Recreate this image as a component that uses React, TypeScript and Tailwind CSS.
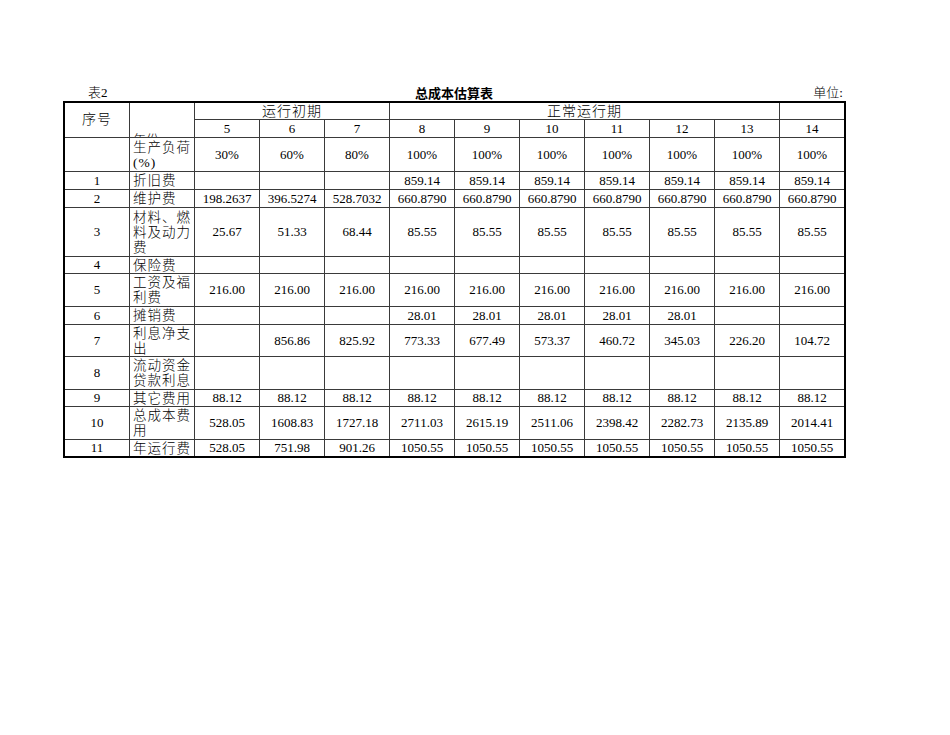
import React from "react";

const years = ["5", "6", "7", "8", "9", "10", "11", "12", "13", "14"];

const rows: { no: string; label: string[]; vals: string[] }[] = [
  { no: "", label: ["生产负荷", "(%)"], vals: ["30%", "60%", "80%", "100%", "100%", "100%", "100%", "100%", "100%", "100%"] },
  { no: "1", label: ["折旧费"], vals: ["", "", "", "859.14", "859.14", "859.14", "859.14", "859.14", "859.14", "859.14"] },
  { no: "2", label: ["维护费"], vals: ["198.2637", "396.5274", "528.7032", "660.8790", "660.8790", "660.8790", "660.8790", "660.8790", "660.8790", "660.8790"] },
  { no: "3", label: ["材料、燃", "料及动力", "费"], vals: ["25.67", "51.33", "68.44", "85.55", "85.55", "85.55", "85.55", "85.55", "85.55", "85.55"] },
  { no: "4", label: ["保险费"], vals: ["", "", "", "", "", "", "", "", "", ""] },
  { no: "5", label: ["工资及福", "利费"], vals: Array(10).fill("216.00") },
  { no: "6", label: ["摊销费"], vals: ["", "", "", "28.01", "28.01", "28.01", "28.01", "28.01", "", ""] },
  { no: "7", label: ["利息净支", "出"], vals: ["", "856.86", "825.92", "773.33", "677.49", "573.37", "460.72", "345.03", "226.20", "104.72"] },
  { no: "8", label: ["流动资金", "贷款利息"], vals: ["", "", "", "", "", "", "", "", "", ""] },
  { no: "9", label: ["其它费用"], vals: Array(10).fill("88.12") },
  { no: "10", label: ["总成本费", "用"], vals: ["528.05", "1608.83", "1727.18", "2711.03", "2615.19", "2511.06", "2398.42", "2282.73", "2135.89", "2014.41"] },
  { no: "11", label: ["年运行费"], vals: ["528.05", "751.98", "901.26", "1050.55", "1050.55", "1050.55", "1050.55", "1050.55", "1050.55", "1050.55"] },
];

// excel-style "distributed" text: every line but the last is spread to full width
function Label({ lines }: { lines: string[] }) {
  return (
    <div className="bg-white flex flex-col justify-center pl-[3px] pr-[4px] text-[13.5px] leading-[15px] font-light">
      {lines.map((l, i) =>
        i < lines.length - 1 ? (
          <div key={i} className="flex justify-between">
            {l.split("").map((c, j) => (
              <span key={j}>{c}</span>
            ))}
          </div>
        ) : (
          <div key={i} className="whitespace-nowrap tracking-[1px]">{l}</div>
        )
      )}
    </div>
  );
}

function Cell({ children, className = "" }: { children?: React.ReactNode; className?: string }) {
  return <div className={"bg-white flex items-center justify-center whitespace-nowrap " + className}>{children}</div>;
}

export default function App() {
  return (
    <div className="w-[950px] h-[735px] bg-white text-black font-['Liberation_Serif','Noto_Sans_CJK_SC',serif] text-[13px] pt-[85px] pl-[63px]">
      {/* title line */}
      <div className="w-[782px] h-[16px] flex items-center justify-between leading-[16px] text-[13px]">
        <span className="pl-[25px] w-[120px] font-light">表2</span>
        <span className="font-bold font-['Noto_Sans_CJK_SC',sans-serif]">总成本估算表</span>
        <span className="w-[120px] text-right pr-[2px] font-light">单位:</span>
      </div>

      <div className="w-fit border-2 border-black bg-[#3a3a3a] grid grid-cols-[repeat(12,64px)] grid-rows-[16px_17px_33px_17px_17px_48px_16px_32px_17px_31px_32px_16px_32px_16px] gap-px">
        <Cell className="row-span-2 text-[14px] font-light pb-[2px] tracking-[1px]">序号</Cell>
        <div className="row-span-2 bg-white overflow-hidden flex items-end pl-[3px]">
          <span className="text-[13px] leading-[13px] font-light -mb-[9px]">年份</span>
        </div>
        <Cell className="col-span-3 text-[14px] font-light tracking-[1px]">运行初期</Cell>
        <Cell className="col-span-6 text-[14px] font-light tracking-[1px]">正常运行期</Cell>
        <Cell />
        {years.map((y) => (
          <Cell key={y}>{y}</Cell>
        ))}

        {rows.map((r, i) => (
          <React.Fragment key={i}>
            <Cell>{r.no}</Cell>
            <Label lines={r.label} />
            {r.vals.map((v, j) => (
              <Cell key={j}>{v}</Cell>
            ))}
          </React.Fragment>
        ))}
      </div>
    </div>
  );
}
